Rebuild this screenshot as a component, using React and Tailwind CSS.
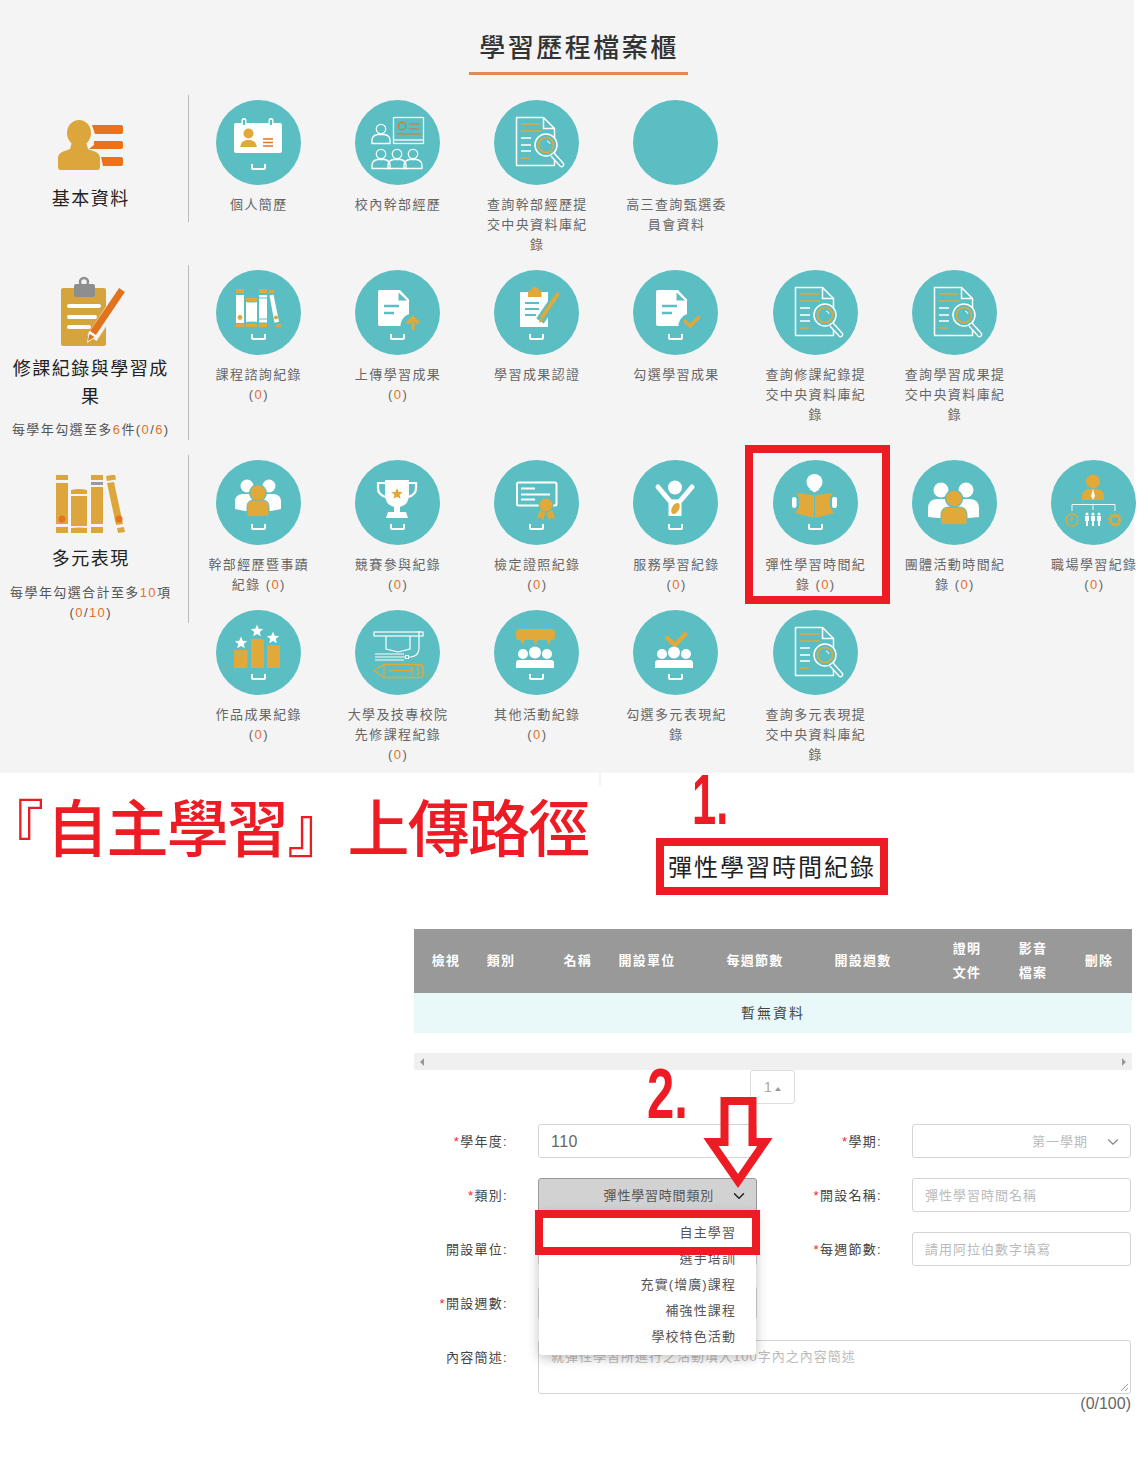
import { ChevronDown } from 'lucide-react'
import { twMerge } from 'tailwind-merge'

const ORANGE = '#e1a83a'
const TEAL = '#5abec2'

function Tray() {
  return <path d="M36 64v4a1 1 0 0 0 1 1h11a1 1 0 0 0 1-1v-4" fill="none" stroke="#fff" strokeWidth="2" />
}

function Star({ x, y, r, fill }) {
  const pts = []
  for (let i = 0; i < 10; i++) {
    const a = -Math.PI / 2 + (i * Math.PI) / 5
    const d = i % 2 === 0 ? r : r * 0.45
    pts.push(`${x + d * Math.cos(a)},${y + d * Math.sin(a)}`)
  }
  return <polygon points={pts.join(' ')} fill={fill} />
}

function IconCard() {
  return (
    <>
      <rect x="18" y="23" width="48" height="30" rx="2" fill="#fff" />
      <rect x="25.5" y="18" width="5" height="9" rx="2.5" fill="#fff" />
      <rect x="27" y="20" width="2" height="5" fill={TEAL} />
      <rect x="52.5" y="18" width="5" height="9" rx="2.5" fill="#fff" />
      <rect x="54" y="20" width="2" height="5" fill={TEAL} />
      <circle cx="32.5" cy="33.5" r="5" fill={ORANGE} />
      <path d="M24 47l2-5 4-2h5l4 2 2 5z" fill={ORANGE} />
      <path d="M47 39h10M47 42.5h10M47 46h10" stroke="#e8731c" strokeWidth="1.4" />
      <Tray />
    </>
  )
}

function Outline({ x, y }) {
  return (
    <>
      <circle cx={x} cy={y} r="4.7" fill="none" stroke="#fff" strokeWidth="1.3" />
      <path d={`M${x - 9} ${y + 14.5}v-3q0-5 5.5-6h7q5.5 1 5.5 6v3z`} fill="none" stroke="#fff" strokeWidth="1.3" />
    </>
  )
}

function IconStaff() {
  return (
    <>
      <rect x="38.5" y="17.5" width="30" height="26" fill="none" stroke="#fff" strokeWidth="1.3" />
      <path d="M38.5 40h30" stroke="#fff" strokeWidth="1.3" />
      <circle cx="47" cy="26" r="3.7" fill="none" stroke="#e8731c" strokeWidth="1.2" />
      <path d="M54 24h10M54 29h10M42 34h24" stroke="#e8731c" strokeWidth="1.2" />
      <Outline x={26} y={29} />
      <Outline x={26} y={54} />
      <Outline x={42} y={54} />
      <Outline x={58} y={54} />
    </>
  )
}

function IconSearch() {
  return (
    <>
      <path d="M22.5 17.5h27l11 11v37h-38z" fill="none" stroke="#fff" strokeWidth="1.5" strokeLinejoin="round" />
      <path d="M49.5 17.5v11h11" fill="none" stroke="#fff" strokeWidth="1.5" />
      <path d="M27 24h19M27 31h20M27 58h9" stroke={ORANGE} strokeWidth="1.6" />
      <path d="M27 38h10M27 45h10M27 51h10" stroke="#fff" strokeWidth="1.5" />
      <circle cx="52" cy="45" r="11" fill={TEAL} stroke="#fff" strokeWidth="1.5" />
      <circle cx="52" cy="45" r="7.5" fill="none" stroke={ORANGE} strokeWidth="1.7" />
      <path d="M53 41a4 4 0 0 1 3 3" fill="none" stroke="#fff" strokeWidth="1" />
      <path d="M60 53l9 10a2 2 0 0 1-3 3l-9-10" fill={TEAL} stroke="#fff" strokeWidth="1.4" />
    </>
  )
}

function IconBooks() {
  return (
    <>
      <rect x="20" y="19" width="8" height="4" fill={ORANGE} />
      <rect x="20" y="25" width="8" height="28" fill="#fff" />
      <circle cx="24" cy="47.5" r="2.4" fill={ORANGE} />
      <rect x="20" y="54" width="8" height="3" fill={ORANGE} />
      <path d="M30 28q5.5-1 11 0v3q-5.5 1-11 0z" fill={ORANGE} />
      <path d="M30 32q5.5 1 11 0v20q-5.5-1-11 0z" fill="#fff" />
      <path d="M30 54q5.500-1 11 0v3h-11z" fill={ORANGE} />
      <rect x="43" y="19" width="8" height="4" fill={ORANGE} />
      <rect x="43" y="25" width="8" height="27.500" fill="#fff" />
      <path d="M43 28h8M43 49h8" stroke={TEAL} strokeWidth="1" />
      <rect x="43" y="54" width="8" height="3" fill={ORANGE} />
      <path d="M52.500 20.500l5.500-1 .6 3.500-5.500 1z" fill={ORANGE} />
      <path d="M53.500 25.500l4-.8 5.500 27-4.500 1z" fill="#fff" />
      <circle cx="60" cy="47.500" r="2" fill={ORANGE} />
      <path d="M59.500 55l5.500-1.200.6 2.500-5.500 1.200z" fill={ORANGE} />
      <Tray />
    </>
  )
}

function DocShape() {
  return (
    <>
      <path d="M25 20h20l9 9.500V56H25a2 2 0 0 1-2-2V22a2 2 0 0 1 2-2z" fill="#fff" />
      <path d="M43.500 22.500v8h8.500z" fill={TEAL} />
      <path d="M29 36h15M29 43h10" stroke={TEAL} strokeWidth="2.5" />
      <circle cx="58" cy="56" r="12.500" fill={TEAL} />
    </>
  )
}

function IconUpload() {
  return (
    <>
      <DocShape />
      <path d="M58 60V48M52 53.500l6-6 6 6" fill="none" stroke={ORANGE} strokeWidth="3.200" />
      <Tray />
    </>
  )
}

function IconTick() {
  return (
    <>
      <DocShape />
      <path d="M51 50.500l6 5.500 9.500-9.500" fill="none" stroke={ORANGE} strokeWidth="3.500" />
      <Tray />
    </>
  )
}

function IconClipboard() {
  return (
    <>
      <path d="M26 22h28v35H26z" fill="#fff" />
      <path d="M31 33h14M31 39h14M31 45h11" stroke={TEAL} strokeWidth="2" />
      <path d="M34 21.500q0-1 1-1h2.500v-1.500q0-2 3.500-2t3.500 2v1.500H47q.5 0 .5 1v5.500H34z" fill={ORANGE} />
      <path d="M65 23L46 51" stroke={TEAL} strokeWidth="9" />
      <path d="M64.500 23L47.500 48" stroke={ORANGE} strokeWidth="4" />
      <path d="M45 53l1-5 3.500 2.500z" fill={ORANGE} />
      <Tray />
    </>
  )
}

function IconLeaders() {
  return (
    <>
      <circle cx="31" cy="26" r="6.500" fill="#fff" />
      <circle cx="53" cy="26" r="6.500" fill="#fff" />
      <path d="M19 49V42q0-8 8-8h30q8 0 8 8v7l-10 2H29z" fill="#fff" />
      <circle cx="42" cy="33" r="8.300" fill={ORANGE} stroke={TEAL} strokeWidth="1.300" />
      <path d="M31 56v-9q0-7 7-7h8q7 0 7 7v9q-11 1.500-22 0z" fill={ORANGE} stroke={TEAL} strokeWidth="1" />
      <Tray />
    </>
  )
}

function IconTrophy() {
  return (
    <>
      <path d="M30 20h24v14q0 11-9 13v5h6l2 6H31l2-6h6v-5q-9-2-9-13z" fill="#fff" />
      <path d="M30 23h-7v5q0 7 8 9M54 23h7v5q0 7-8 9" fill="none" stroke="#fff" strokeWidth="2.200" />
      <Star x={42} y={34} r={6} fill={ORANGE} />
      <Tray />
    </>
  )
}

function IconCert() {
  return (
    <>
      <rect x="23" y="22.500" width="39.500" height="23" rx="1.500" fill="none" stroke="#fff" strokeWidth="2" />
      <path d="M27 28.500h14M27 34.500h29M27 39.500h14" stroke="#fff" strokeWidth="1.800" />
      <path d="M46 50l-3.500 9 4-1.500 2.500 3 2.500-8zM58 50l3.500 9-4-1.500-2.500 3-2.500-8z" fill={ORANGE} />
      <circle cx="52" cy="45" r="7" fill={ORANGE} stroke={TEAL} strokeWidth="1" />
      <Tray />
    </>
  )
}

function IconService() {
  return (
    <>
      <circle cx="42" cy="27.500" r="7" fill="#fff" />
      <path d="M25 27l11 13M59 27L48 40" stroke="#fff" strokeWidth="5" strokeLinecap="round" />
      <path d="M35.500 38q6.500 3 13 0v18h-13z" fill="#fff" />
      <ellipse cx="42.500" cy="48.500" rx="3.500" ry="6" transform="rotate(30 42.500 48.500)" fill={ORANGE} />
      <Tray />
    </>
  )
}

function IconFlex() {
  return (
    <>
      <circle cx="41.500" cy="22" r="8" fill="#fff" />
      <path d="M36 29h11l-5.500 3.500z" fill="#fff" />
      <path d="M23 33l18 2v23l-19-5 4-6V38zM60 33l-18 2v23l19-5-4-6V38z" fill={ORANGE} />
      <rect x="19" y="37" width="4.500" height="11" rx="2.200" fill="#fff" />
      <rect x="59" y="37" width="5" height="11" rx="2.200" fill="#fff" />
      <Tray />
    </>
  )
}

function IconGroup() {
  return (
    <>
      <circle cx="29" cy="30" r="7.500" fill="#fff" />
      <circle cx="54" cy="30" r="7.500" fill="#fff" />
      <path d="M16 57V49q0-10 9-10h33q9 0 9 10v8l-10 1H26z" fill="#fff" />
      <circle cx="42" cy="38.500" r="8.500" fill={ORANGE} stroke={TEAL} strokeWidth="1.300" />
      <path d="M29 64V55q0-8 8-8h10q8 0 8 8v9q-13 2-26 0z" fill={ORANGE} stroke={TEAL} strokeWidth="1" />
    </>
  )
}

function IconWork() {
  return (
    <>
      <circle cx="42" cy="21.500" r="7" fill={ORANGE} />
      <path d="M31 40v-4q0-6 7-7h8q7 1 7 7v4z" fill={ORANGE} />
      <path d="M42 29l-2 7 2 4 2-4z" fill="#fff" />
      <path d="M21 51v-6.500h43V51M42 44.500V50" fill="none" stroke="#fff" strokeWidth="0.900" />
      <circle cx="21" cy="60" r="6" fill="none" stroke={ORANGE} strokeWidth="1.300" />
      <path d="M21 56v4h-3" fill="none" stroke={ORANGE} strokeWidth="1" />
      {[36, 42, 48].map((x) => (
        <g key={x}>
          <circle cx={x} cy="54" r="1.500" fill="#fff" />
          <path d={`M${x - 2} 56h4v5h-1v5h-2v-5h-1z`} fill="#fff" />
        </g>
      ))}
      <circle cx="64" cy="60" r="4.500" fill="none" stroke={ORANGE} strokeWidth="2.500" />
      <circle cx="64" cy="60" r="6.300" fill="none" stroke={ORANGE} strokeWidth="1.300" strokeDasharray="2 2" />
    </>
  )
}

function IconWorks() {
  return (
    <>
      <rect x="18" y="40" width="13.500" height="18" fill={ORANGE} />
      <rect x="35" y="29" width="13" height="29" fill={ORANGE} />
      <rect x="51" y="35" width="13" height="23" fill={ORANGE} />
      <Star x={25} y={33} r={6.500} fill="#fff" />
      <Star x={41} y={21} r={6.500} fill="#fff" />
      <Star x={57} y={28} r={6.500} fill="#fff" />
      <Tray />
    </>
  )
}

function IconGrad() {
  return (
    <>
      <rect x="19" y="22" width="49" height="4" fill="none" stroke="#fff" strokeWidth="1.200" />
      <path d="M31 26v13l12 3 12-3V26" fill="none" stroke="#fff" strokeWidth="1.200" />
      <path d="M64 21v17q0 8-8 9l-3 0" fill="none" stroke="#fff" strokeWidth="1.200" />
      <path d="M20 44h29M20 47h31M20 50h29" stroke="#fff" strokeWidth="1.100" />
      <rect x="50.500" y="45.500" width="3" height="3" fill="none" stroke="#fff" strokeWidth="1" />
      <path d="M19 60.500l10-6h36q3 0 3 3v7q0 3-3 3H29z" fill="none" stroke={ORANGE} strokeWidth="1.400" />
      <path d="M29 54.500v12M34 60.500h23M57 56v9M63 55v11" fill="none" stroke={ORANGE} strokeWidth="1.200" />
    </>
  )
}

function PeopleRow({ cx }) {
  return (
    <>
      <circle cx={cx - 12} cy="44" r="5" fill="#fff" />
      <circle cx={cx} cy="42.500" r="6" fill="#fff" />
      <circle cx={cx + 12} cy="44" r="5" fill="#fff" />
      <path d={`M${cx - 19} 58v-5q0-3 3-3h32q3 0 3 3v5z`} fill="#fff" />
    </>
  )
}

function IconOther() {
  return (
    <>
      <rect x="22" y="19" width="39" height="11" rx="3" fill={ORANGE} />
      <path d="M26 29h5l-2 6zM39 29h5l-2 6zM52 29h5l-2 6z" fill={ORANGE} />
      <PeopleRow cx={41} />
      <Tray />
    </>
  )
}

function IconPick() {
  return (
    <>
      <path d="M33 27l9 8 11.500-12" fill="none" stroke={ORANGE} strokeWidth="4.500" />
      <PeopleRow cx={41} />
      <Tray />
    </>
  )
}

function Circle({ children }) {
  return (
    <svg viewBox="0 0 85 85" className="h-[85px] w-[85px] shrink-0">
      <circle cx="42.500" cy="42.500" r="42.500" fill={TEAL} />
      {children}
    </svg>
  )
}

function Zero({ value = '0' }) {
  return <span className="text-[#e8702a]">{value}</span>
}

function Item({ label, count, icon }) {
  return (
    <div className="flex flex-col items-center">
      <Circle>{icon}</Circle>
      <p className="mt-[10px] w-[106px] pl-[1.400px] text-center text-[13px] leading-[20px] tracking-[1.400px] text-[#666]">
        {label}
        {count && (
          <>
            {' '}
            (<Zero />)
          </>
        )}
      </p>
    </div>
  )
}

const basicItems = [
  { label: '個人簡歷', icon: <IconCard /> },
  { label: '校內幹部經歷', icon: <IconStaff /> },
  { label: '查詢幹部經歷提交中央資料庫紀錄', icon: <IconSearch /> },
  { label: '高三查詢甄選委員會資料' },
]

const courseItems = [
  { label: '課程諮詢紀錄', count: true, icon: <IconBooks /> },
  { label: '上傳學習成果', count: true, icon: <IconUpload /> },
  { label: '學習成果認證', icon: <IconClipboard /> },
  { label: '勾選學習成果', icon: <IconTick /> },
  { label: '查詢修課紀錄提交中央資料庫紀錄', icon: <IconSearch /> },
  { label: '查詢學習成果提交中央資料庫紀錄', icon: <IconSearch /> },
]

const diverseItems = [
  { label: '幹部經歷暨事蹟紀錄', count: true, icon: <IconLeaders /> },
  { label: '競賽參與紀錄', count: true, icon: <IconTrophy /> },
  { label: '檢定證照紀錄', count: true, icon: <IconCert /> },
  { label: '服務學習紀錄', count: true, icon: <IconService /> },
  { label: '彈性學習時間紀錄', count: true, icon: <IconFlex /> },
  { label: '團體活動時間紀錄', count: true, icon: <IconGroup /> },
  { label: '職場學習紀錄', count: true, icon: <IconWork /> },
  { label: '作品成果紀錄', count: true, icon: <IconWorks /> },
  { label: '大學及技專校院先修課程紀錄', count: true, icon: <IconGrad /> },
  { label: '其他活動紀錄', count: true, icon: <IconOther /> },
  { label: '勾選多元表現紀錄', icon: <IconPick /> },
  { label: '查詢多元表現提交中央資料庫紀錄', icon: <IconSearch /> },
]

function ItemGrid({ items, rowClass }) {
  return (
    <div className={`grid w-[975px] shrink-0 grid-cols-[repeat(7,139.250px)] pt-[5px] ${rowClass}`}>
      {items.map((item) => (
        <Item key={item.label} {...item} />
      ))}
    </div>
  )
}

function SideHead({ children, heightClass }) {
  return (
    <div className={`flex w-[188.500px] shrink-0 flex-col items-center border-r border-[#bbb] pr-[6px] text-center ${heightClass}`}>
      {children}
    </div>
  )
}

function SideTitle({ children }) {
  return <h3 className="w-[172px] text-[18px] leading-[28px] tracking-[1.500px] text-[#222]">{children}</h3>
}

function SideNote({ children }) {
  return <p className="w-[172px] text-[13px] leading-[20px] tracking-[1.400px] text-[#555]">{children}</p>
}

function Portfolio() {
  return (
    <section className="relative h-[773px] w-[1134px] bg-[#f4f4f4] pt-[28px]">
      <h1 className="ml-[469px] w-[219px] border-b-[3px] border-[#e08a55] pb-[4px] pl-[1px] text-center text-[26px] leading-[40px] font-medium tracking-[2.500px] text-[#333]">
        學習歷程檔案櫃
      </h1>

      <div className="mt-[20px] flex h-[170px]">
        <SideHead heightClass="h-[127px] pt-[25px]">
          <svg viewBox="0 0 65 50" className="h-[50px] w-[65px]">
            <ellipse cx="21" cy="13" rx="12" ry="13" fill="#dca63c" />
            <path d="M14 22h14l2 7 8 3q4 2 4 6v9q0 3-3 3H3q-3 0-3-3V38q0-4 4-6l8-3z" fill="#dca63c" />
            <path d="M34 5h29q2 0 2 2v5q0 2-2 2H37z" fill="#e8731c" />
            <path d="M36 21h27q2 0 2 2v4q0 2-2 2H31l5-4z" fill="#e8731c" />
            <path d="M43 37h20q2 0 2 2v5q0 2-2 2H45z" fill="#e8731c" />
          </svg>
          <div className="mt-[15px]">
            <SideTitle>基本資料</SideTitle>
          </div>
        </SideHead>
        <ItemGrid items={basicItems} rowClass="" />
      </div>

      <div className="flex h-[190px]">
        <SideHead heightClass="h-[175px] pt-[10px]">
          <svg viewBox="0 0 70 75" className="h-[75px] w-[70px]">
            <rect x="5" y="13" width="45" height="58" rx="2" fill="#d6a43c" />
            <rect x="18" y="9" width="21" height="13" rx="2" fill="#8e8e8e" />
            <circle cx="28" cy="7" r="4" fill="none" stroke="#8e8e8e" strokeWidth="2.500" />
            <path d="M13 31h30M13 42h26M13 52h20" stroke="#fff" strokeWidth="4" strokeLinecap="round" />
            <path d="M66 17L36 63" stroke="#f4f4f4" strokeWidth="11" />
            <path d="M66 15L37 58" stroke="#e1731c" strokeWidth="7" />
            <path d="M31 68l2-12 8 5z" fill="#f4f4f4" />
            <path d="M32 66l1.500-7 5 3z" fill="#e1731c" />
          </svg>
          <div className="mt-[5px]">
            <SideTitle>修課紀錄與學習成果</SideTitle>
          </div>
          <div className="mt-[9px]">
            <SideNote>
              每學年勾選至多<Zero value="6" />件(<Zero />/<Zero value="6" />)
            </SideNote>
          </div>
        </SideHead>
        <ItemGrid items={courseItems} rowClass="" />
      </div>

      <div className="flex">
        <SideHead heightClass="h-[168px] pt-[20px]">
          <svg viewBox="0 0 70 58" className="h-[58px] w-[70px]">
            <g fill="#dca63c">
              <rect x="0" y="0" width="12" height="5" />
              <rect x="0" y="8" width="12" height="41" />
              <rect x="0" y="52" width="12" height="6" />
              <path d="M15 15q8-2 16 0v4H15z" />
              <rect x="15" y="21" width="16" height="30" />
              <path d="M15 53q8-1 16 0v5H15z" />
              <rect x="35" y="0" width="12" height="5" />
              <rect x="35" y="12" width="12" height="37" />
              <rect x="35" y="52" width="12" height="6" />
              <path d="M50 1l9-1.500 1 5-9 1.500z" />
              <path d="M51 8l7-1 9 42-7 1z" />
              <path d="M61 53l7-1 1 5-7 1z" />
            </g>
            <rect x="35" y="7" width="12" height="3" fill="#9a9a9a" />
            <circle cx="6" cy="44" r="3.500" fill="#e8731c" />
            <circle cx="63" cy="44" r="3.500" fill="#e8731c" />
          </svg>
          <div className="mt-[12px]">
            <SideTitle>多元表現</SideTitle>
          </div>
          <div className="mt-[10px]">
            <SideNote>
              每學年勾選合計至多<Zero value="10" />項
            </SideNote>
            <SideNote>
              (<Zero />/<Zero value="10" />)
            </SideNote>
          </div>
        </SideHead>
        <ItemGrid items={diverseItems} rowClass="auto-rows-[150px]" />
      </div>

      <div className="absolute top-[445px] left-[745px] h-[159px] w-[145px] border-[8px] border-[#ed1c24]" />
    </section>
  )
}

function Label({ required, children }) {
  return (
    <div className="flex h-[34px] items-center justify-end pt-[1px] text-[13px] tracking-[1.300px] text-[#444]">
      {required && <span className="text-[#f5222d]">*</span>}
      {children}:
    </div>
  )
}

function Field({ children, className = '' }) {
  return (
    <div
      className={twMerge(
        'flex h-[34px] items-center rounded-[3px] border border-[#d4d4d4] bg-white px-[12px] pt-[1px] text-[13px] tracking-[1px] text-[#bbb]',
        className,
      )}
    >
      {children}
    </div>
  )
}

function HeadCell({ className = '', children }) {
  return <div className={`flex shrink-0 justify-center text-center ${className}`}>{children}</div>
}

function RecordTable() {
  return (
    <div className="ml-[414px] w-[718px]">
      <div className="flex h-[64px] items-center bg-[#999] text-[13px] leading-[24px] font-bold tracking-[1.300px] text-white">
        <HeadCell className="w-[64px]">檢視</HeadCell>
        <HeadCell className="w-[46px]">類別</HeadCell>
        <HeadCell className="w-[68px] justify-end">名稱</HeadCell>
        <HeadCell className="w-[110px]">開設單位</HeadCell>
        <HeadCell className="w-[106px]">每週節數</HeadCell>
        <HeadCell className="w-[110px]">開設週數</HeadCell>
        <HeadCell className="ml-[16px] w-[66px]">
          證明
          <br />
          文件
        </HeadCell>
        <HeadCell className="w-[66px]">
          影音
          <br />
          檔案
        </HeadCell>
        <HeadCell className="w-[66px]">刪除</HeadCell>
      </div>
      <div className="flex h-[40px] items-center justify-center bg-[#e9f9f9] text-[14px] tracking-[2px] text-[#444]">暫無資料</div>
      <div className="mt-[20px] flex h-[17px] items-center justify-between bg-[#f0f0f0] px-[6px]">
        <span className="h-0 w-0 border-y-[4px] border-r-[4px] border-y-transparent border-r-[#999]" />
        <span className="h-0 w-0 border-y-[4px] border-l-[4px] border-y-transparent border-l-[#999]" />
      </div>
    </div>
  )
}

function RecordForm() {
  return (
    <div className="relative ml-[414px] w-[718px]">
      <div className="ml-[336px] flex h-[34px] w-[45px] items-center justify-center gap-[3px] rounded-[3px] border border-[#ddd] text-[14px] text-[#b9a08e]">
        1
        <span className="mt-[3px] h-0 w-0 border-x-[3px] border-b-[4px] border-x-transparent border-b-[#999]" />
      </div>

      <div className="mt-[20px] grid grid-cols-[94px_219px_95px_219px] gap-x-[30px] gap-y-[20px]">
        <Label required>學年度</Label>
        <Field className="text-[16px] tracking-[0.500px] text-[#666]">110</Field>
        <Label required>學期</Label>
        <Field className="justify-end gap-[16px] pr-[8px]">
          第一學期
          <ChevronDown className="h-[18px] w-[18px] text-[#888]" strokeWidth={1.500} />
        </Field>

        <Label required>類別</Label>
        <div className="relative z-10">
          <Field className="justify-end gap-[16px] border-[#999] bg-[#d2d2d2] pr-[8px] tracking-[0.800px] text-[#555]">
            彈性學習時間類別
            <ChevronDown className="h-[18px] w-[18px] text-[#222]" strokeWidth={2} />
          </Field>
          <ul className="absolute top-[34px] left-[1px] h-[143px] w-[217px] rounded-b-[3px] bg-white py-[8px] pr-[20px] text-right text-[13px] leading-[26px] tracking-[1.100px] text-[#555] shadow-[0_3px_12px_rgba(0,0,0,0.25)]">
            <li>自主學習</li>
            <li>選手培訓</li>
            <li>充實(增廣)課程</li>
            <li>補強性課程</li>
            <li>學校特色活動</li>
          </ul>
          <div className="absolute top-[32px] left-[-3px] h-[45px] w-[225px] border-[8px] border-[#ed1c24]" />
        </div>
        <Label required>開設名稱</Label>
        <Field>彈性學習時間名稱</Field>

        <Label>開設單位</Label>
        <Field />
        <Label required>每週節數</Label>
        <Field>請用阿拉伯數字填寫</Field>

        <Label required>開設週數</Label>
        <Field />
        <div className="col-span-2" />

        <Label>內容簡述</Label>
        <div className="relative col-span-3 h-[54px] rounded-[3px] border border-[#d4d4d4] bg-white px-[12px] pt-[6px] text-[13px] leading-[20px] tracking-[1px] text-[#bbb]">
          就彈性學習所進行之活動填入100字內之內容簡述
          <svg viewBox="0 0 10 10" className="absolute right-[1px] bottom-[1px] h-[10px] w-[10px]">
            <path d="M9 2L2 9M9 6L6 9" stroke="#888" strokeWidth="0.800" />
          </svg>
        </div>
      </div>
      <p className="mt-[1px] pr-[1px] text-right text-[16px] leading-[18px] text-[#666]">(0/100)</p>

      {/* red arrow and step number drawn over the form */}
      <span className="absolute top-[-11px] left-[233px] origin-left scale-x-[0.7] text-[70px] leading-[70px] font-bold text-[#ed1c24]">2.</span>
      <svg viewBox="0 0 70 92" className="absolute top-[26px] left-[289px] z-20 h-[92px] w-[70px]">
        <path d="M21.500 5H49.500V46H62L35 85L8 46H21.500Z" fill="none" stroke="#ed1c24" strokeWidth="8" />
      </svg>
    </div>
  )
}

export default function App() {
  return (
    <div className="relative h-[1473px] w-[1148px] overflow-hidden bg-white font-['Liberation_Sans','Noto_Sans_CJK_TC',sans-serif]">
      <Portfolio />
      <div className="absolute top-[773px] left-[599px] h-[13px] w-[2px] bg-[#f4f4f4]" />

      <div className="flex h-[156px]">
        <h2 className="w-[656px] shrink-0 pt-[23px] pl-[13px] text-[62px] leading-[70px] font-medium tracking-[-1.750px] whitespace-nowrap text-[#ed1c24]">
          <span className="mr-[4px] [font-feature-settings:'halt']">『</span>
          自主學習』上傳路徑
        </h2>
        <div className="w-[232px] shrink-0">
          <div className="ml-[36px] h-[65px] origin-left scale-x-[0.62] text-[70px] leading-[54px] font-bold text-[#ed1c24]">1.</div>
          <div className="flex h-[57px] items-center justify-center border-[8px] border-[#ed1c24] bg-white pt-[3px] text-[24px] tracking-[2px] text-[#222]">
            彈性學習時間紀錄
          </div>
        </div>
      </div>

      <RecordTable />
      <RecordForm />
    </div>
  )
}
